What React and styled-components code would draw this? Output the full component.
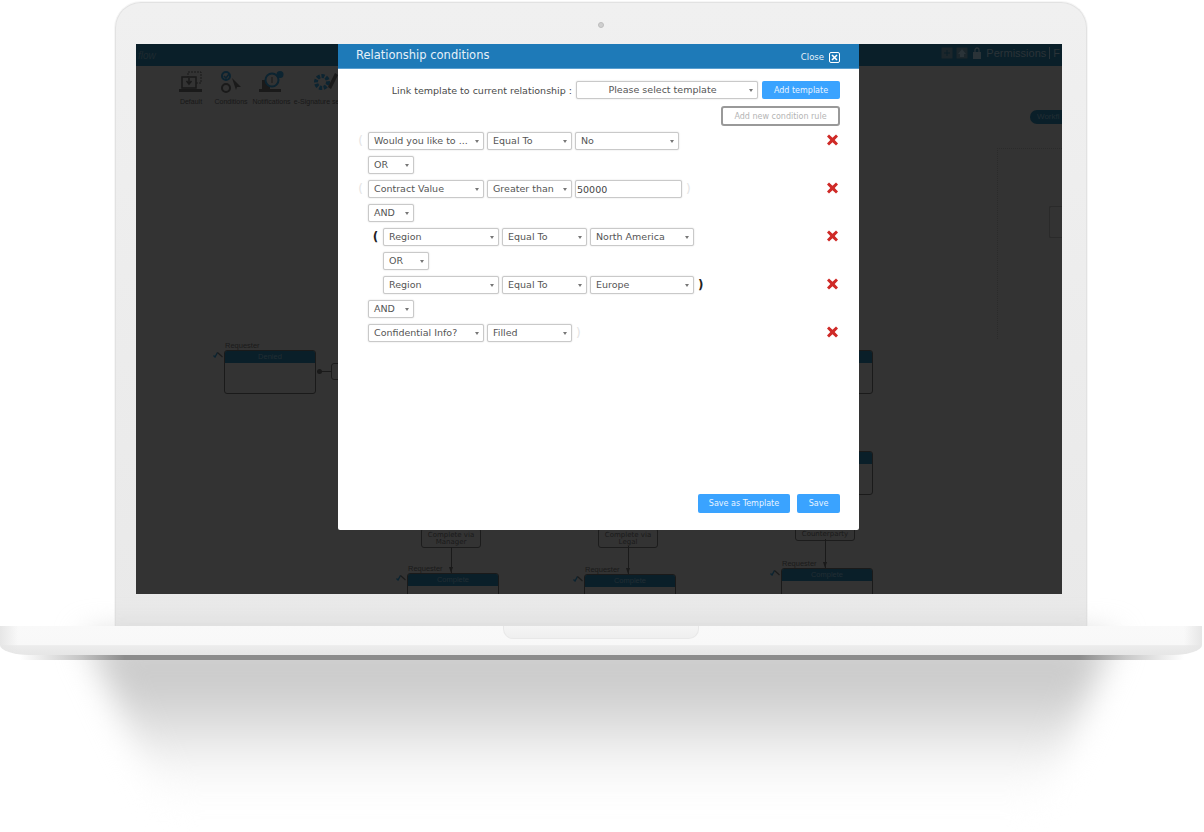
import React from 'react';
import styled, { createGlobalStyle } from 'styled-components';

const GlobalStyle = createGlobalStyle`
  html, body {
    margin: 0;
    padding: 0;
    background: #fff;
  }
  body {
    font-family: "DejaVu Sans", Verdana, sans-serif;
  }
`;

const RULES = [
  { id: 1, open: 'light', fields: [['Would you like to ...', 116], ['Equal To', 85], ['No', 104]], remove: true },
  { id: 2, logic: 'OR' },
  { id: 3, open: 'light', fields: [['Contract Value', 116], ['Greater than', 85]], value: '50000', close: 'light', remove: true },
  { id: 4, logic: 'AND' },
  { id: 5, indent: true, open: 'bold', fields: [['Region', 116], ['Equal To', 85], ['North America', 104]], remove: true },
  { id: 6, indent: true, logic: 'OR' },
  { id: 7, indent: true, fields: [['Region', 116], ['Equal To', 85], ['Europe', 104]], close: 'bold', remove: true },
  { id: 8, logic: 'AND' },
  { id: 9, fields: [['Confidential Info?', 116], ['Filled', 85]], close: 'light', remove: true },
];

const RED_X = 'M2 0.5 L5.5 3.8 L9 0.5 L11 2.5 L7.7 6 L11 9.5 L9 11.5 L5.5 8.2 L2 11.5 L0 9.5 L3.3 6 L0 2.5 Z';

function Pick({ label, width, children }) {
  return (
    <SelectBox $width={width}>
      {label}
      {children}
      <Caret />
    </SelectBox>
  );
}

function Rule({ rule }) {
  if (rule.logic) {
    return (
      <RuleRow $indent={rule.indent}>
        <Paren />
        <Pick label={rule.logic} width={46} />
      </RuleRow>
    );
  }
  return (
    <RuleRow $indent={rule.indent}>
      <Paren $kind={rule.open}>{rule.open ? '(' : ''}</Paren>
      {rule.fields.map(([label, width]) => <Pick key={label} label={label} width={width} />)}
      {rule.value && <ValueInput>{rule.value}</ValueInput>}
      {rule.close && <CloseParen $kind={rule.close}>)</CloseParen>}
      {rule.remove && (
        <RemoveIcon viewBox="0 0 11 12">
          <path d={RED_X} fill="#cf2a27" />
        </RemoveIcon>
      )}
    </RuleRow>
  );
}

function DiagramNode({ x, y, title, height, label = 'Requester' }) {
  return (
    <Node $x={x} $y={y} $h={height}>
      <NodeLabel>{label}</NodeLabel>
      <ReturnMark viewBox="0 0 10 7">
        <path d="M0.5 4.5 L2 6 L4.5 1.5" fill="none" stroke="#0c2431" strokeWidth="1.4" />
        <path d="M4.5 1.5 L9.5 6" fill="none" stroke="#1c1c1c" strokeWidth="1.2" />
      </ReturnMark>
      <NodeHead>{title}</NodeHead>
    </Node>
  );
}

export default function App() {
  return (
    <Page>
      <GlobalStyle />
      <Lid>
        <Camera />
        <Screen>
          <TopBar>
            <Brand>flow</Brand>
            <TopActions>
              <TopIcon viewBox="0 0 12 12"><rect x="0.5" y="0.5" width="11" height="11" fill="#1c262b" /><path d="M3 6h6M6 3v6" stroke="#0a1f29" /></TopIcon>
              <TopIcon viewBox="0 0 12 12"><rect x="0.5" y="0.5" width="11" height="11" fill="#1c262b" /><path d="M6 2 L10 7 H8 V10 H4 V7 H2 Z" fill="#2a3338" /></TopIcon>
              <TopIcon viewBox="0 0 12 12"><rect x="2" y="5" width="8" height="7" fill="#2a3338" /><path d="M4 5 V3 a2 2 0 0 1 4 0 V5" fill="none" stroke="#2a3338" strokeWidth="1.3" /></TopIcon>
              <TopText>Permissions</TopText>
              <TopDivider />
              <TopText>F</TopText>
            </TopActions>
          </TopBar>
          <Ribbon>
            <Tool $w={40}>
              <ToolIcon viewBox="0 0 24 22">
                <rect x="9" y="1" width="13" height="11" fill="none" stroke="#1a1a1a" strokeDasharray="2 1" />
                <rect x="3" y="6" width="14" height="11" fill="#333" stroke="#1a1a1a" strokeWidth="1.5" />
                <path d="M10 7v5M7.5 10l2.5 3 2.5-3" fill="none" stroke="#1a1a1a" strokeWidth="1.5" />
                <path d="M0 18h23v3H0z" fill="#1a1a1a" />
              </ToolIcon>
              <ToolLabel>Default</ToolLabel>
            </Tool>
            <Tool $w={40}>
              <ToolIcon viewBox="0 0 24 22">
                <circle cx="7" cy="5" r="4" fill="none" stroke="#0c2431" strokeWidth="2" />
                <path d="M5 5l2 2 3-4" fill="none" stroke="#0c2431" strokeWidth="1.5" />
                <circle cx="7" cy="17" r="4" fill="none" stroke="#1a1a1a" strokeWidth="2" />
                <path d="M13 7 L22 16 L18 16 L17 19 Z" fill="#1a1a1a" />
              </ToolIcon>
              <ToolLabel>Conditions</ToolLabel>
            </Tool>
            <Tool $w={41}>
              <ToolIcon viewBox="0 0 26 22">
                <path d="M3 9h8v9H3zM0 18h22v3H0z" fill="#1a1a1a" />
                <circle cx="13" cy="9" r="6.5" fill="#333" stroke="#0c2431" strokeWidth="2" />
                <path d="M13 6v6" stroke="#1a1a1a" />
                <circle cx="21" cy="3.5" r="3.5" fill="#0c2431" />
              </ToolIcon>
              <ToolLabel>Notifications</ToolLabel>
            </Tool>
            <Tool $w={66}>
              <ToolIcon viewBox="0 0 26 22">
                <circle cx="10" cy="11" r="6" fill="none" stroke="#0c2431" strokeWidth="4" strokeDasharray="3 1.5" />
                <path d="M16 16 L23 2 L26 4 L19 18 Z" fill="#1a1a1a" />
              </ToolIcon>
              <ToolLabel>e-Signature settings</ToolLabel>
            </Tool>
          </Ribbon>
          <Canvas>
            <WorkflowTab>Workfl</WorkflowTab>
            <DottedArea />
            <SideBox />

            <DiagramNode x={88} y={240} height={44} title="Denied" />
            <LinkBox $x={195} $y={253} $w={30} />
            <Wire $x={181} $y={261} $w={15} />

            <DiagramNode x={645} y={240} height={44} title="" />
            <DiagramNode x={645} y={341} height={44} title="" />

            <LinkBox $x={285} $y={418} $w={60} $pad={3}>Complete via<br />Manager</LinkBox>
            <Drop $x={315} $y={437} $h={26} />
            <DiagramNode x={271} y={463} height={30} title="Complete" />

            <LinkBox $x={462} $y={418} $w={60} $pad={3}>Complete via<br />Legal</LinkBox>
            <Drop $x={492} $y={436} $h={28} />
            <DiagramNode x={448} y={464} height={30} title="Complete" />

            <LinkBox $x={659} $y={412} $w={60} $pad={8}>Counterparty</LinkBox>
            <Drop $x={689} $y={429} $h={29} />
            <DiagramNode x={645} y={458} height={30} title="Complete" />
          </Canvas>

          <Modal>
            <ModalHeader>
              <ModalTitle>Relationship conditions</ModalTitle>
              <CloseAction>
                Close
                <CloseIcon viewBox="0 0 11 11">
                  <rect x="0.5" y="0.5" width="10" height="10" rx="1.5" fill="none" stroke="#fff" />
                  <path d="M3 3l5 5M8 3l-5 5" stroke="#fff" strokeWidth="1.6" />
                </CloseIcon>
              </CloseAction>
            </ModalHeader>
            <ModalBody>
              <TemplateRow>
                <TemplateLabel>Link template to current relationship :</TemplateLabel>
                <Pick width={182}><CenteredText>Please select template</CenteredText></Pick>
                <PrimaryButton $w={78} $h={18}>Add template</PrimaryButton>
              </TemplateRow>
              <NewRuleRow>
                <GhostButton>Add new condition rule</GhostButton>
              </NewRuleRow>
              <RuleList>
                {RULES.map(rule => <Rule key={rule.id} rule={rule} />)}
              </RuleList>
              <Footer>
                <PrimaryButton $w={92} $h={19}>Save as Template</PrimaryButton>
                <PrimaryButton $w={43} $h={19}>Save</PrimaryButton>
              </Footer>
            </ModalBody>
          </Modal>
        </Screen>
      </Lid>
      <Base>
        <Notch />
      </Base>
      <ShadowEdge />
      <ShadowBlur>
        <ShadowShape />
      </ShadowBlur>
    </Page>
  );
}

const Page = styled.div`
  width: 1204px;
  height: 832px;
  padding-top: 2px;
  box-sizing: border-box;
  overflow: hidden;
  background: #fff;
`;

const Lid = styled.div`
  position: relative;
  box-sizing: border-box;
  width: 972px;
  height: 624px;
  margin-left: 115px;
  padding: 41px 24px 32px 20px;
  background: linear-gradient(#f0f0f0, #e9e9e9);
  border: 1px solid #e2e2e2;
  border-bottom: 0;
  border-radius: 26px 26px 0 0;
  box-shadow: 0 0 0 1px #f6f6f6;
`;

const Camera = styled.div`
  position: absolute;
  top: 19px;
  left: 482px;
  width: 4px;
  height: 4px;
  border-radius: 50%;
  background: #cfcfcf;
  border: 1px solid #bdbdbd;
`;

const Screen = styled.div`
  position: relative;
  width: 926px;
  height: 550px;
  display: flex;
  flex-direction: column;
  overflow: hidden;
  background: #333;
  font-family: "Liberation Sans", Arial, sans-serif;
`;

const TopBar = styled.div`
  flex: none;
  height: 22px;
  display: flex;
  align-items: center;
  justify-content: space-between;
  background: #0a1f29;
`;

const Brand = styled.div`
  font-size: 10px;
  font-style: italic;
  color: #1e2a30;
  padding-left: 2px;
`;

const TopActions = styled.div`
  display: flex;
  align-items: center;
  gap: 3px;
  padding: 0 2px 4px 0;
`;

const TopIcon = styled.svg`
  width: 12px;
  height: 12px;
`;

const TopText = styled.span`
  font-size: 11px;
  color: #2a3338;
`;

const TopDivider = styled.span`
  width: 1px;
  height: 12px;
  background: #2a3338;
`;

const Ribbon = styled.div`
  flex: none;
  height: 44px;
  display: flex;
  padding-left: 35px;
  background-color: #333;
  background-image: radial-gradient(#292929 0.6px, transparent 0.7px);
  background-size: 2px 2px;
`;

const Tool = styled.div`
  width: ${p => p.$w}px;
  display: flex;
  flex-direction: column;
  align-items: center;
  padding-top: 5px;
`;

const ToolIcon = styled.svg`
  flex: none;
  width: 26px;
  height: 22px;
`;

const ToolLabel = styled.div`
  margin-top: 4px;
  font-size: 7px;
  line-height: 9px;
  white-space: nowrap;
  color: #181818;
`;

const Canvas = styled.div`
  position: relative;
  flex: 1;
`;

const WorkflowTab = styled.div`
  position: absolute;
  top: 0;
  right: 0;
  width: 32px;
  height: 14px;
  padding-left: 7px;
  box-sizing: border-box;
  border-radius: 7px 0 0 7px;
  background: #0a1f29;
  font-size: 8px;
  line-height: 14px;
  color: #222e34;
`;

const DottedArea = styled.div`
  position: absolute;
  top: 38px;
  right: 0;
  width: 64px;
  height: 190px;
  border-left: 1px dotted #2b2b2b;
  border-top: 1px dotted #2b2b2b;
`;

const SideBox = styled.div`
  position: absolute;
  top: 96px;
  right: 0;
  width: 12px;
  height: 30px;
  border: 1px solid #2a2a2a;
  border-right: 0;
  border-radius: 2px 0 0 2px;
`;

const Node = styled.div`
  position: absolute;
  left: ${p => p.$x}px;
  top: ${p => p.$y}px;
  width: 92px;
  height: ${p => p.$h}px;
  box-sizing: border-box;
  border: 1px solid #1a1a1a;
  border-radius: 3px;
`;

const NodeLabel = styled.div`
  position: absolute;
  left: 0;
  top: -10px;
  font-size: 7.5px;
  line-height: 9px;
  color: #1a1a1a;
`;

const ReturnMark = styled.svg`
  position: absolute;
  left: -12px;
  top: 0;
  width: 10px;
  height: 7px;
`;

const NodeHead = styled.div`
  height: 12px;
  background: #0a1f29;
  border-radius: 2px 2px 0 0;
  text-align: center;
  font-size: 7.5px;
  line-height: 12px;
  color: #222e34;
`;

const LinkBox = styled.div`
  position: absolute;
  left: ${p => p.$x}px;
  top: ${p => p.$y}px;
  width: ${p => p.$w}px;
  min-height: 17px;
  box-sizing: border-box;
  padding-top: ${p => p.$pad || 0}px;
  padding-bottom: 2px;
  border: 1px solid #1c1c1c;
  border-radius: 3px;
  text-align: center;
  white-space: nowrap;
  font-family: "DejaVu Sans", sans-serif;
  font-size: 7px;
  line-height: 6.5px;
  color: #1a1a1a;
`;

const Wire = styled.div`
  position: absolute;
  left: ${p => p.$x}px;
  top: ${p => p.$y}px;
  width: ${p => p.$w}px;
  height: 1px;
  background: #1a1a1a;

  &::before {
    content: '';
    position: absolute;
    left: 0;
    top: -2px;
    width: 5px;
    height: 5px;
    border-radius: 50%;
    background: #1a1a1a;
  }
`;

const Drop = styled.div`
  position: absolute;
  left: ${p => p.$x}px;
  top: ${p => p.$y}px;
  width: 1px;
  height: ${p => p.$h}px;
  background: #1a1a1a;

  &::after {
    content: '';
    position: absolute;
    left: -2px;
    bottom: 0;
    border-left: 2.5px solid transparent;
    border-right: 2.5px solid transparent;
    border-top: 6px solid #1a1a1a;
  }
`;

const Modal = styled.div`
  position: absolute;
  left: 202px;
  top: 0;
  width: 521px;
  height: 486px;
  display: flex;
  flex-direction: column;
  background: #fff;
  border-radius: 0 0 2px 2px;
  font-family: "DejaVu Sans", Verdana, sans-serif;
`;

const ModalHeader = styled.div`
  flex: none;
  height: 24px;
  display: flex;
  align-items: center;
  justify-content: space-between;
  padding: 0 19px 0 18px;
  background: #1e7ab8;
  border-bottom: 1px solid #5a9fd0;
`;

const ModalTitle = styled.div`
  padding-bottom: 2px;
  font-size: 11.5px;
  color: #e6f1f8;
`;

const CloseAction = styled.div`
  display: flex;
  align-items: center;
  gap: 5px;
  padding-top: 2px;
  font-size: 8.5px;
  color: #e6f1f8;
`;

const CloseIcon = styled.svg`
  width: 11px;
  height: 11px;
`;

const ModalBody = styled.div`
  flex: 1;
  display: flex;
  flex-direction: column;
  padding: 12px 19px 17px 18px;
`;

const TemplateRow = styled.div`
  display: flex;
  align-items: center;
  gap: 4px;
`;

const TemplateLabel = styled.div`
  flex: 1;
  text-align: right;
  font-size: 9.5px;
  color: #4a4a4a;
`;

const CenteredText = styled.span`
  flex: 1;
  text-align: center;
`;

const SelectBox = styled.div`
  position: relative;
  flex: none;
  width: ${p => p.$width}px;
  height: 18px;
  display: flex;
  align-items: center;
  box-sizing: border-box;
  padding: 0 14px 1px 5px;
  white-space: nowrap;
  background: #fff;
  border: 1px solid #c9c9c9;
  border-radius: 2px;
  box-shadow: 0 0 1.5px #cfcfcf;
  font-size: 9.5px;
  color: #555;
`;

const Caret = styled.span`
  position: absolute;
  right: 4px;
  top: 7px;
  border-left: 2px solid transparent;
  border-right: 2px solid transparent;
  border-top: 3px solid #777;
`;

const ValueInput = styled.div`
  flex: none;
  width: 107px;
  height: 18px;
  display: flex;
  align-items: center;
  box-sizing: border-box;
  padding-left: 1px;
  background: #fff;
  border: 1px solid #c9c9c9;
  border-radius: 2px;
  box-shadow: 0 0 1.5px #cfcfcf;
  font-size: 9.5px;
  color: #444;
`;

const PrimaryButton = styled.div`
  flex: none;
  width: ${p => p.$w}px;
  height: ${p => p.$h}px;
  display: flex;
  align-items: center;
  justify-content: center;
  background: #3aa3ff;
  border-radius: 2px;
  font-size: 8px;
  color: #e8f4ff;
`;

const NewRuleRow = styled.div`
  display: flex;
  justify-content: flex-end;
  margin-top: 7px;
`;

const GhostButton = styled.div`
  width: 119px;
  height: 20px;
  display: flex;
  align-items: center;
  justify-content: center;
  box-sizing: border-box;
  border: 2px solid #999;
  border-radius: 3px;
  font-size: 8px;
  color: #b4b4b4;
`;

const RuleList = styled.div`
  display: flex;
  flex-direction: column;
  margin-top: 3px;
`;

const RuleRow = styled.div`
  height: 24px;
  display: flex;
  align-items: center;
  gap: 3px;
  padding-left: ${p => (p.$indent ? 15 : 0)}px;
`;

const parenColor = p => (p.$kind === 'bold' ? '#222' : '#e4e4e4');

const Paren = styled.span`
  flex: none;
  width: 9px;
  text-align: center;
  font-size: 12px;
  font-weight: ${p => (p.$kind === 'bold' ? 700 : 400)};
  color: ${parenColor};
`;

const CloseParen = styled.span`
  margin-left: 1px;
  font-size: 12px;
  font-weight: ${p => (p.$kind === 'bold' ? 700 : 400)};
  color: ${parenColor};
`;

const RemoveIcon = styled.svg`
  width: 11px;
  height: 12px;
  margin-left: auto;
  margin-right: 2px;
  margin-bottom: 2px;
`;

const Footer = styled.div`
  margin-top: auto;
  display: flex;
  justify-content: flex-end;
  gap: 7px;
`;

const Base = styled.div`
  position: relative;
  z-index: 2;
  height: 29px;
  width: 1202px;
  background:
    linear-gradient(90deg, #e6e6e6 0, transparent 18px, transparent calc(100% - 18px), #e6e6e6 100%),
    linear-gradient(#f9f9f9 0, #f8f8f8 64%, #ececec 68%, #e6e6e6 100%);
  border-radius: 0 0 30px 30px / 0 0 10px 10px;
`;

const Notch = styled.div`
  position: absolute;
  top: 0;
  left: 503px;
  width: 196px;
  height: 13px;
  box-sizing: border-box;
  background: linear-gradient(#f5f5f5, #efefef);
  border: 1px solid #e8e8e8;
  border-top: 0;
  border-radius: 0 0 10px 10px;
`;

const ShadowEdge = styled.div`
  position: relative;
  z-index: 1;
  height: 6px;
  margin: -1px 20px 0;
  background: linear-gradient(90deg, transparent, #c8c8c8 5%, #8c8c8c 9%, #8c8c8c 91%, #c8c8c8 95%, transparent);
`;

const ShadowBlur = styled.div`
  height: 170px;
  margin-top: -24px;
  filter: blur(16px);
`;

const ShadowShape = styled.div`
  height: 100%;
  background: linear-gradient(#cbcbcb, #cdcdcd 30%, #e4e4e4 56%, #f7f7f7 76%, #fff);
  clip-path: polygon(85px 0, 1115px 0, 1040px 100%, 165px 100%);
`;
